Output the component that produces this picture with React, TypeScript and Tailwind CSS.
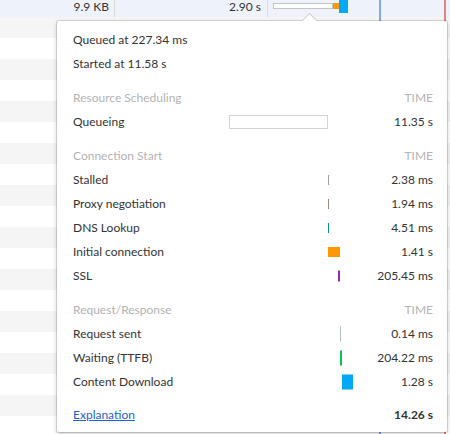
import React from "react";

type Bar = { left: number; width: number; height: number; color: string; outline?: boolean };

interface TimingRow {
  label: string;
  value: string;
  bars: Bar[];
}

interface Section {
  title: string;
  rows: TimingRow[];
}

const sections: Section[] = [
  {
    title: "Resource Scheduling",
    rows: [
      {
        label: "Queueing",
        value: "11.35 s",
        bars: [{ left: 0, width: 99, height: 14, color: "#ffffff", outline: true }],
      },
    ],
  },
  {
    title: "Connection Start",
    rows: [
      { label: "Stalled", value: "2.38 ms", bars: [{ left: 99, width: 1, height: 10, color: "#9e9e9e" }] },
      { label: "Proxy negotiation", value: "1.94 ms", bars: [{ left: 99, width: 1, height: 10, color: "#a1887f" }] },
      { label: "DNS Lookup", value: "4.51 ms", bars: [{ left: 99, width: 1, height: 10, color: "#009688" }] },
      { label: "Initial connection", value: "1.41 s", bars: [{ left: 99, width: 12, height: 10, color: "#ff9800" }] },
      { label: "SSL", value: "205.45 ms", bars: [{ left: 109, width: 2, height: 11, color: "#9c27b0" }] },
    ],
  },
  {
    title: "Request/Response",
    rows: [
      { label: "Request sent", value: "0.14 ms", bars: [{ left: 111, width: 1, height: 15, color: "#b0bec5" }] },
      { label: "Waiting (TTFB)", value: "204.22 ms", bars: [{ left: 111, width: 2, height: 15, color: "#00c853" }] },
      { label: "Content Download", value: "1.28 s", bars: [{ left: 113, width: 11, height: 15, color: "#03a9f4" }] },
    ],
  },
];

const stripes = Array.from({ length: 20 }, (_, i) => i);

const Row: React.FC<{ row: TimingRow }> = ({ row }) => (
  <div className="flex h-[24px] items-center">
    <div className="w-[156px]">{row.label}</div>
    <div className="relative h-full w-[126px]">
      {row.bars.map((b, i) => (
        <div
          key={i}
          className={
            b.outline
              ? "absolute top-1/2 -translate-y-1/2 border border-[#d4d4d4]"
              : "absolute top-1/2 -translate-y-1/2"
          }
          style={{ left: b.left, width: b.width, height: b.height, backgroundColor: b.color }}
        />
      ))}
    </div>
    <div className="flex-1 text-right">{row.value}</div>
  </div>
);

export default function App() {
  return (
    <div className="relative h-[434px] w-[450px] overflow-hidden bg-white font-['Lato','Open_Sans',sans-serif] text-[12px] text-[#333]">
      {/* network table rows */}
      <div className="-mt-[4px] flex h-[21px] items-center bg-[#eef3fb]">
        <div className="flex h-full w-[115px] items-center justify-end border-r border-[#dadada] pr-[5px]">9.9 KB</div>
        <div className="flex h-full w-[153px] items-center justify-end border-r border-[#dadada] pr-[6px]">2.90 s</div>
        <div className="relative h-full flex-1">
          <div className="absolute left-[5px] top-[7px] h-[6px] w-[60px] border border-[#c4c4c4] bg-white" />
          <div className="absolute left-[65px] top-[7px] h-[6px] w-[6px] bg-[#ff9800]" />
          <div className="absolute left-[71px] top-[4px] h-[13px] w-[1px] bg-[#00c853]" />
          <div className="absolute left-[72px] top-[4px] h-[13px] w-[8px] bg-[#03a9f4]" />
        </div>
      </div>
      {stripes.map((i) => (
        <div key={i} className={i % 2 === 0 ? "h-[21px] bg-[#f5f5f5]" : "h-[21px] bg-white"} />
      ))}

      {/* timeline markers */}
      <div className="absolute left-[379px] top-0 h-full w-[2px] bg-[#7fa9e6]" />
      <div className="absolute left-[444px] top-0 h-full w-[2px] bg-[#e08585]" />

      {/* timing popover */}
      <div className="absolute left-[57px] top-[21px] h-[411px] w-[390px] rounded-[2px] bg-white pl-[16px] pr-[14px] pt-[7px] shadow-[0_0_0_1px_rgba(0,0,0,0.12),0_2px_5px_rgba(0,0,0,0.22)]">
        <div className="absolute left-[247px] top-[-6px] h-[11px] w-[11px] rotate-45 border-l border-t border-[#cfcfcf] bg-white" />
        <div className="flex h-[24px] items-center">Queued at 227.34 ms</div>
        <div className="flex h-[24px] items-center">Started at 11.58 s</div>

        {sections.map((s) => (
          <div key={s.title} className="mt-[10px]">
            <div className="flex h-[24px] items-center justify-between text-[#b3b3b3]">
              <span>{s.title}</span>
              <span>TIME</span>
            </div>
            {s.rows.map((r) => (
              <Row key={r.label} row={r} />
            ))}
          </div>
        ))}

        <div className="mt-[9px] flex h-[24px] items-center justify-between">
          <a href="#" className="text-[#1a62d6] underline">
            Explanation
          </a>
          <span className="font-bold">14.26 s</span>
        </div>
      </div>
    </div>
  );
}
